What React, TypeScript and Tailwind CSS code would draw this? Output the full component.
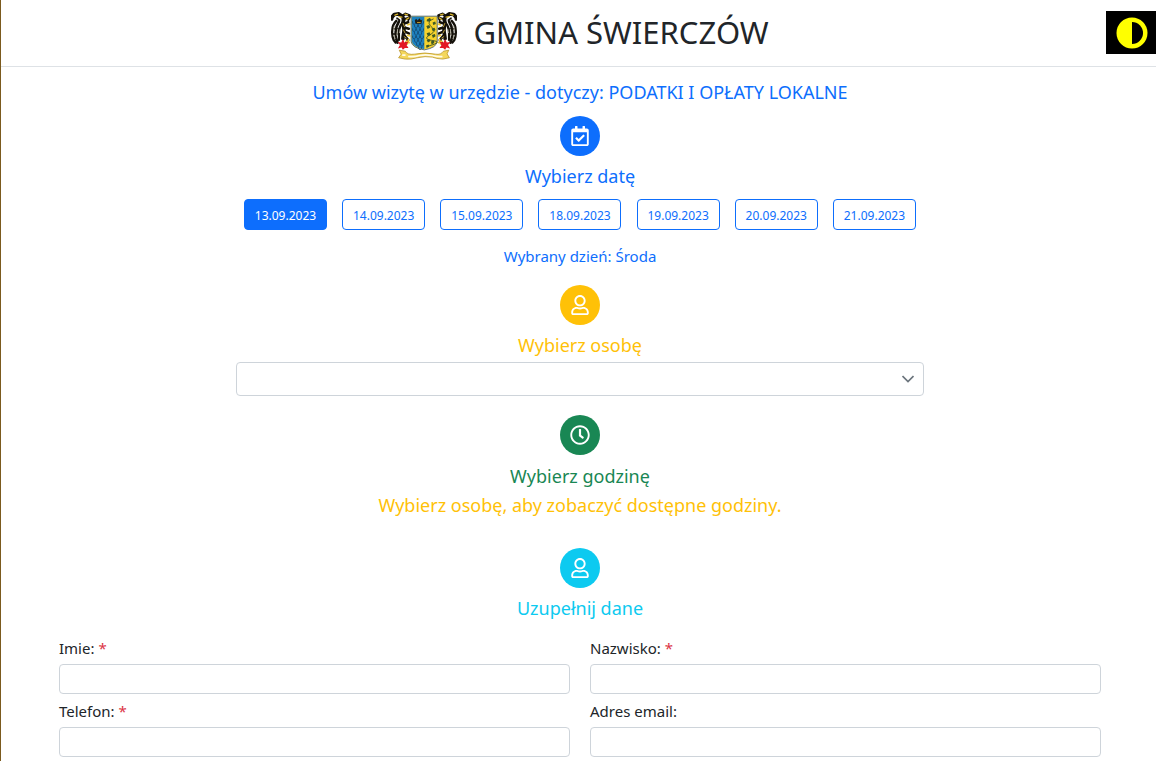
import { useState, type ReactNode } from "react";
import { FaRegCalendarCheck, FaRegClock, FaRegUser } from "react-icons/fa";

const dates = [
  "13.09.2023",
  "14.09.2023",
  "15.09.2023",
  "18.09.2023",
  "19.09.2023",
  "20.09.2023",
  "21.09.2023",
];

const weekdays = ["Środa", "Czwartek", "Piątek", "Poniedziałek", "Wtorek", "Środa", "Czwartek"];

function Eagle() {
  return (
    <g>
      <g fill="none" stroke="#14110a" strokeLinecap="round" strokeLinejoin="round">
        <path d="M16 26 Q4 38 4 54 Q2 70 8 84 L14 92" strokeWidth="7" />
        <path d="M24 28 Q14 44 14 60 Q12 76 20 92" strokeWidth="8" />
        <path d="M30 38 Q22 54 24 68 L24 84" strokeWidth="7" />
        <path d="M4 14 L10 7 L24 5 L34 12 Q41 22 35 34 Q42 48 38 66 L36 80" strokeWidth="11" />
        <path d="M4 14 L3 22 M34 12 L44 5 L56 10 M38 22 L52 18 M40 34 L52 30 M40 46 L54 50 M40 58 L54 64 M40 70 L52 84 L46 94" strokeWidth="8" />
        <path d="M18 18 L26 24 M58 14 L52 26 M6 66 L20 66 M8 50 L26 52" strokeWidth="5" />
      </g>
      <g fill="none" strokeLinecap="round">
        <path d="M12 9 L20 6 M24 13 L33 15 M42 6 L50 8 M46 22 L54 17" stroke="#d9b52c" strokeWidth="4" />
        <path d="M10 42 L8 56 M9 70 L12 80 M20 52 L18 70 M28 52 L26 62" stroke="#aaa796" strokeWidth="3" />
        <path d="M37 34 L41 44 M38 54 L42 62 M40 74 L46 78" stroke="#b89c3a" strokeWidth="3" />
        <path d="M51 38 L57 36 M50 70 L57 72 M46 88 L56 92 M53 82 L50 96" stroke="#f0ca36" strokeWidth="5" />
      </g>
      <path d="M36 82 L41 92 L53 89 L47 99 L53 108 L42 108 L36 114 L32 107 L21 110 L27 99 L20 90 L31 92 Z" fill="#e31825" />
    </g>
  );
}

const scales: [number, number][] = [];
for (let row = 0; row < 8; row++) {
  for (let col = 0; col < 3; col++) scales.push([70 + col * 12 + (row % 2) * 6, 27 + row * 11]);
}

function Crest() {
  return (
    <svg viewBox="0 0 200 144" className="h-12 w-[66px] shrink-0" role="img" aria-label="Herb gminy">
      <Eagle />
      <g transform="translate(200 0) scale(-1 1)">
        <Eagle />
      </g>
      <path d="M61 12 H140 V88 Q138 108 101 114 Q63 108 61 88 Z" fill="#f7d22c" stroke="#5d7078" strokeWidth="3" />
      <path d="M63 14 H101 V112 Q65 106 63 88 Z" fill="#1e80bd" />
      <g fill="none" stroke="#123d62" strokeWidth="2">
        {scales
          .filter(([x, y]) => x < 97 && !(y > 92 && x < 77))
          .map(([x, y]) => (
            <path key={`${x}-${y}`} d={`M${x - 5} ${y} L${x - 4} ${y + 7} L${x} ${y + 10} L${x + 4} ${y + 7} L${x + 5} ${y}`} />
          ))}
      </g>
      <path d="M72 25 L76 20 L81 25 L86 18 L91 25 L95 22 L92 35 H75 Z" fill="#221d12" />
      <path d="M79 31 H90" stroke="#c89c28" strokeWidth="3" />
      <path d="M129 20 Q108 28 119 40 T131 56 T114 71 T128 86 T112 103" fill="none" stroke="#53622b" strokeWidth="3" />
      <g fill="#3e5a25">
        <path d="M109 22 l9-5 4 7-6 5-8-2z M126 31 l8-3 2 8-8 3z M107 42 l9-3 3 7-8 5z M123 49 l9-2 3 7-8 4z M108 64 l9-3 3 8-8 4z M124 69 l9-3 2 7-8 5z M108 84 l8-3 4 6-8 5z M121 89 l9-4 1 8-8 5z M106 101 l8-3 2 6-8 4z" />
      </g>
      <path d="M25 115 L43 118 Q50 130 71 127 Q102 120 135 127 Q151 130 159 118 L175 115 L170 126 L177 138 L157 142 Q137 141 125 136 Q104 132 80 138 Q58 144 43 142 L23 138 L31 127 Z" fill="#f4d75c" stroke="#ad8310" strokeWidth="2" strokeLinejoin="round" />
      <path d="M34 130 H44 M52 134 Q72 136 86 131 Q105 127 125 131 Q144 136 156 134" fill="none" stroke="#fffbe8" strokeWidth="5" />
    </svg>
  );
}

function StepIcon({ color, children }: { color: string; children: ReactNode }) {
  return (
    <div className={`flex size-10 items-center justify-center rounded-full text-xl text-white ${color}`}>
      {children}
    </div>
  );
}

function Field({ id, label, type, required }: { id: string; label: string; type: string; required?: boolean }) {
  return (
    <div>
      <label htmlFor={id} className="block text-[15px] leading-6">
        {label} {required && <span className="text-[#dc3545]">*</span>}
      </label>
      <input
        id={id}
        type={type}
        required={required}
        className="mt-1 block h-[30px] w-full rounded border border-[#ced4da] bg-white px-2 text-sm outline-none focus:border-[#86b7fe]"
      />
    </div>
  );
}

export default function App() {
  const [selected, setSelected] = useState(0);

  return (
    <div className="min-h-screen border-l border-[#7b5a1e] bg-white font-['Noto_Sans','Open_Sans',sans-serif] text-[#212529]">
      <header className="relative flex h-[67px] items-center justify-center border-b border-[#dee2e6] pl-[3px]">
        <div className="flex items-end gap-4 pt-1.5">
          <Crest />
          <h1 className="pb-2 text-[31px] leading-10">GMINA ŚWIERCZÓW</h1>
        </div>
        <button
          type="button"
          aria-label="Wysoki kontrast"
          className="absolute top-[11px] right-0 flex h-[43px] w-[50px] items-center justify-center bg-black"
        >
          <svg viewBox="0 0 32 32" className="ml-0.5 size-8">
            <circle cx="16" cy="16" r="15.5" fill="#ff0" />
            <path d="M16 5 A11 11 0 0 1 16 27 Z" fill="#000" />
          </svg>
        </button>
      </header>

      <main className="pl-[3px]">
        <div className="flex flex-col items-center px-[55px] text-center">
          <h2 className="mt-[13px] text-lg leading-6 text-[#0d6efd]">
            Umów wizytę w urzędzie - dotyczy: PODATKI I OPŁATY LOKALNE
          </h2>

          <section className="mt-3 flex w-full flex-col items-center">
            <StepIcon color="bg-[#0d6efd]"><FaRegCalendarCheck /></StepIcon>
            <h3 className="mt-2 text-lg leading-6 text-[#0d6efd]">Wybierz datę</h3>
            <div className="mt-[11px] flex w-full max-w-[672px] justify-between">
              {dates.map((date, i) => (
                <button
                  key={date}
                  type="button"
                  aria-pressed={i === selected}
                  onClick={() => setSelected(i)}
                  className={`h-[31px] w-[83px] rounded border border-[#0d6efd] pt-0.5 text-xs ${
                    i === selected ? "bg-[#0d6efd] text-white" : "bg-white text-[#0d6efd]"
                  }`}
                >
                  {date}
                </button>
              ))}
            </div>
            <p className="mt-[14px] text-[15px] leading-6 text-[#0d6efd]">Wybrany dzień: {weekdays[selected]}</p>
          </section>

          <section className="mt-[17px] flex w-full flex-col items-center">
            <StepIcon color="bg-[#ffc107]"><FaRegUser /></StepIcon>
            <label htmlFor="person" className="mt-2 text-lg leading-6 text-[#ffc107]">Wybierz osobę</label>
            <div className="relative mt-[5px] w-[66%]">
              <select
                id="person"
                defaultValue=""
                className="block h-[34px] w-full appearance-none rounded-sm border border-[#ced4da] bg-white px-3 pr-9 text-base outline-none"
              >
                <option value=""></option>
              </select>
              <svg viewBox="0 0 12 8" className="pointer-events-none absolute top-[13px] right-[10px] h-2 w-3" fill="none" stroke="#6c757d" strokeWidth="1.7">
                <path d="M0.5 1 L6 6.5 L11.5 1" />
              </svg>
            </div>
          </section>

          <section className="mt-[19px] flex flex-col items-center">
            <StepIcon color="bg-[#198754]"><FaRegClock /></StepIcon>
            <h3 className="mt-[9px] text-lg leading-6 text-[#198754]">Wybierz godzinę</h3>
            <p className="mt-[5px] text-lg leading-6 text-[#ffc107]">Wybierz osobę, aby zobaczyć dostępne godziny.</p>
          </section>

          <section className="mt-[31px] flex flex-col items-center">
            <StepIcon color="bg-[#0dcaf0]"><FaRegUser /></StepIcon>
            <h3 className="mt-2 text-lg leading-6 text-[#0dcaf0]">Uzupełnij dane</h3>
          </section>
        </div>

        <form className="mt-4 grid grid-cols-2 gap-x-5 gap-y-[5px] px-[55px] pb-1">
          <Field id="first-name" label="Imie:" type="text" required />
          <Field id="last-name" label="Nazwisko:" type="text" required />
          <Field id="phone" label="Telefon:" type="tel" required />
          <Field id="email" label="Adres email:" type="email" />
        </form>
      </main>
    </div>
  );
}
